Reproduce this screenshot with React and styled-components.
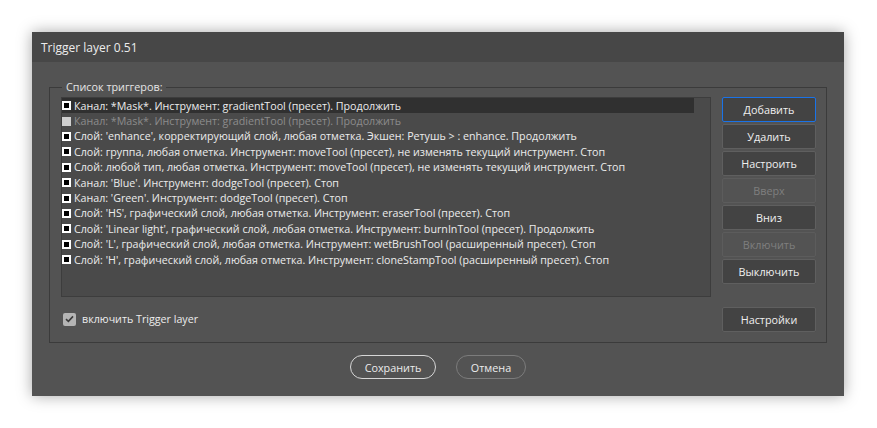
import React from "react";
import styled, { createGlobalStyle } from "styled-components";

const Global = createGlobalStyle`
  html, body { margin: 0; padding: 0; background: #ffffff; }
  body { width: 877px; height: 428px; overflow: hidden; font-family: "Open Sans", "Noto Sans", sans-serif; }
`;

const Page = styled.div`
  padding: 32px 0 0 32px;
`;

const Dialog = styled.div`
  width: 812px;
  height: 364px;
  background: #535353;
  box-shadow: 0 0 14px rgba(0, 0, 0, 0.35);
  display: flex;
  flex-direction: column;
`;

const TitleBar = styled.div`
  height: 30px;
  background: #474747;
  color: #ececec;
  font-size: 12px;
  display: flex;
  align-items: center;
  padding-left: 9px;
`;

const Body = styled.div`
  padding: 17px 17px 0 17px;
  display: flex;
  flex-direction: column;
`;

const Group = styled.fieldset`
  margin: 0;
  border: 1px solid #3b3b3b;
  padding: 2px 11px 11px 11px;
  display: grid;
  grid-template-columns: 650px 94px;
  grid-template-rows: 200px 24px;
  column-gap: 11px;
  row-gap: 10px;
  min-width: 0;
`;

const Legend = styled.legend`
  color: #e6e6e6;
  font-size: 10.8px;
  line-height: 16px;
  padding: 0 4px;
  margin-left: 1px;
`;

const List = styled.div`
  background: #4a4a4a;
  border: 1px solid #3d3d3d;
  box-sizing: border-box;
  padding-right: 16px;
  overflow: hidden;
`;

const Row = styled.div`
  height: 15.4px;
  display: flex;
  align-items: center;
  gap: 2px;
  background: ${(p) => (p.$selected ? "#303030" : "transparent")};
  color: ${(p) => (p.$disabled ? "#8c8c8c" : "#ececec")};
  font-size: 10.7px;
  white-space: nowrap;
`;

const Mark = styled.span`
  width: 9px;
  height: 9px;
  box-sizing: border-box;
  flex: none;
  background: ${(p) => (p.$disabled ? "#cfcfcf" : "#000")};
  border: 2px solid ${(p) => (p.$disabled ? "#cfcfcf" : "#ffffff")};
  margin-right: 1px;
`;

const ButtonCol = styled.div`
  display: flex;
  flex-direction: column;
  gap: 2px;
`;

const SideButton = styled.button`
  height: 25px;
  width: 94px;
  box-sizing: border-box;
  font-family: inherit;
  font-size: 10.8px;
  border-radius: 2px;
  padding: 0;
  background: ${(p) => (p.$disabled ? "#535353" : "#434343")};
  border: 1px solid ${(p) => (p.$focus ? "#1a73e8" : p.$disabled ? "#5c5c5c" : "#5f5f5f")};
  color: ${(p) => (p.$disabled ? "#7f7f7f" : "#f0f0f0")};
`;

const CheckRow = styled.label`
  display: flex;
  align-items: center;
  gap: 6px;
  padding-left: 2px;
  color: #ececec;
  font-size: 10.7px;
`;

const Check = styled.span`
  width: 13px;
  height: 13px;
  border-radius: 2px;
  background: #b4b4b4;
  display: flex;
  align-items: center;
  justify-content: center;
`;

const Footer = styled.div`
  display: flex;
  justify-content: center;
  gap: 20px;
  padding-top: 12px;
`;

const PillButton = styled.button`
  height: 24px;
  width: ${(p) => p.$w}px;
  box-sizing: border-box;
  border-radius: 12px;
  background: transparent;
  border: ${(p) => (p.$primary ? "1.5px solid #d6d6d6" : "1px solid #7c7c7c")};
  color: #ececec;
  font-family: inherit;
  font-size: 10.8px;
  padding: 0;
`;

const rows = [
  { t: "Канал: *Mask*. Инструмент: gradientTool (пресет). Продолжить", s: true },
  { t: "Канал: *Mask*. Инструмент: gradientTool (пресет). Продолжить", d: true },
  { t: "Слой: 'enhance', корректирующий слой, любая отметка. Экшен: Ретушь > : enhance. Продолжить" },
  { t: "Слой: группа, любая отметка. Инструмент: moveTool (пресет), не изменять текущий инструмент. Стоп" },
  { t: "Слой: любой тип, любая отметка. Инструмент: moveTool (пресет), не изменять текущий инструмент. Стоп" },
  { t: "Канал: 'Blue'. Инструмент: dodgeTool (пресет). Стоп" },
  { t: "Канал: 'Green'. Инструмент: dodgeTool (пресет). Стоп" },
  { t: "Слой: 'HS', графический слой, любая отметка. Инструмент: eraserTool (пресет). Стоп" },
  { t: "Слой: 'Linear light', графический слой, любая отметка. Инструмент: burnInTool (пресет). Продолжить" },
  { t: "Слой: 'L', графический слой, любая отметка. Инструмент: wetBrushTool (расширенный пресет). Стоп" },
  { t: "Слой: 'H', графический слой, любая отметка. Инструмент: cloneStampTool (расширенный пресет). Стоп" },
];

const buttons = [
  { t: "Добавить", f: true },
  { t: "Удалить" },
  { t: "Настроить" },
  { t: "Вверх", d: true },
  { t: "Вниз" },
  { t: "Включить", d: true },
  { t: "Выключить" },
];

export default function App() {
  return (
    <>
      <Global />
      <Page>
        <Dialog>
          <TitleBar>Trigger layer 0.51</TitleBar>
          <Body>
            <Group>
              <Legend>Список триггеров:</Legend>
              <List>
                {rows.map((r, i) => (
                  <Row key={i} $selected={r.s} $disabled={r.d}>
                    <Mark $disabled={r.d} />
                    {r.t}
                  </Row>
                ))}
              </List>
              <ButtonCol>
                {buttons.map((b) => (
                  <SideButton key={b.t} $focus={b.f} $disabled={b.d}>
                    {b.t}
                  </SideButton>
                ))}
              </ButtonCol>
              <CheckRow>
                <Check>
                  <svg width="9" height="8" viewBox="0 0 9 8">
                    <path d="M1 4.2 L3.4 6.4 L8 1.4" fill="none" stroke="#3a3a3a" strokeWidth="1.6" />
                  </svg>
                </Check>
                включить Trigger layer
              </CheckRow>
              <SideButton>Настройки</SideButton>
            </Group>
            <Footer>
              <PillButton $primary $w={86}>Сохранить</PillButton>
              <PillButton $w={70}>Отмена</PillButton>
            </Footer>
          </Body>
        </Dialog>
      </Page>
    </>
  );
}
